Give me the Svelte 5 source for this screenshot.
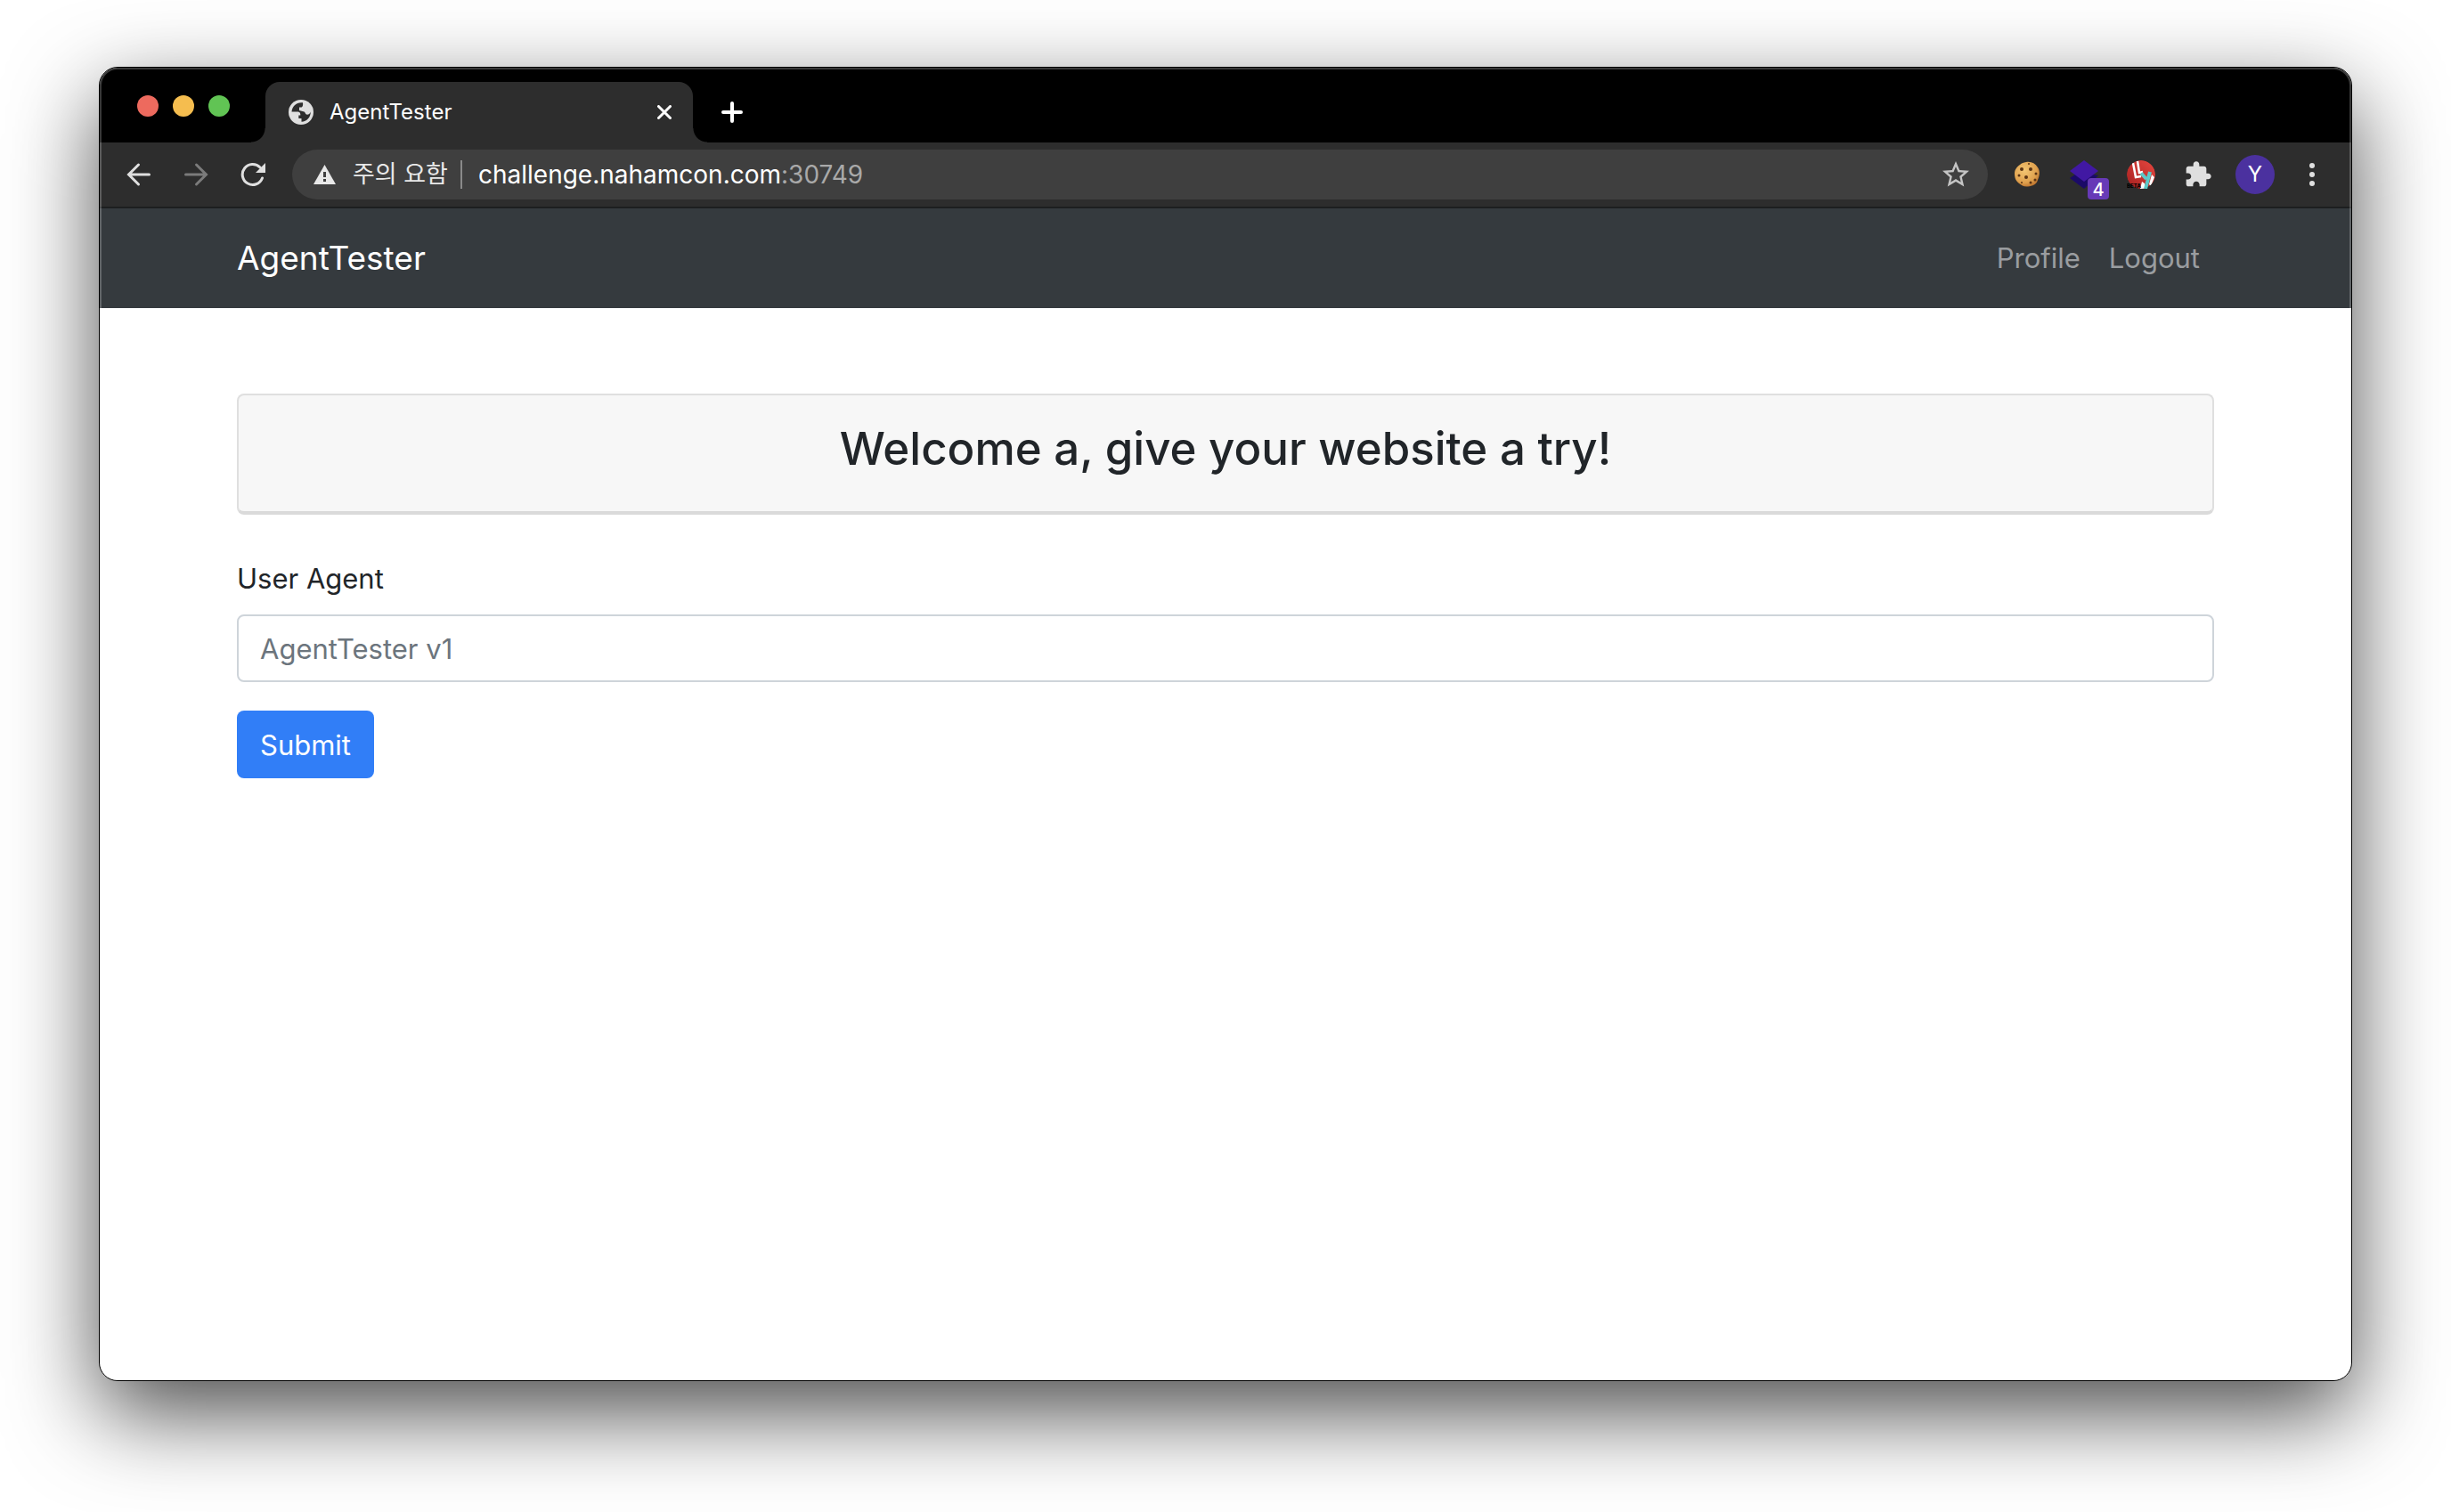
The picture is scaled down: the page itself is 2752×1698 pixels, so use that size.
<script>
  let agent = $state('');
  let address = $state('challenge.nahamcon.com');
</script>

<div class="desktop">
  <div class="window">
    <header class="tabstrip">
      <div class="lights">
        <button class="light red" aria-label="Close window"></button>
        <button class="light yellow" aria-label="Minimize window"></button>
        <button class="light green" aria-label="Zoom window"></button>
      </div>
      <div class="tab">
        <svg width="28" height="28" viewBox="0 0 28 28" aria-hidden="true">
          <circle cx="14" cy="14" r="14" fill="#dfdfdf" />
          <path d="M16 3.300C9 2.500 4 7 3.500 13.500H9C11.500 13.500 13.300 14 13.300 16.500V17.500H11.300V21H14.500V24.700C20.500 24.500 25 19.500 24.700 13.500C24 16 22.500 16.700 21 16.700C18.500 16.700 19 14 17.500 13.500L12 12V8.500H14C15.500 8.500 16.500 7 16 3.300Z" fill="#2d2d2d" />
        </svg>
        <span class="title">AgentTester</span>
        <button class="icon" aria-label="Close tab">
          <svg width="16" height="16" viewBox="0 0 16 16"><path d="M1.500 1.500L14.500 14.500M14.500 1.500L1.500 14.500" stroke="#fff" stroke-width="3" stroke-linecap="round" /></svg>
        </button>
      </div>
      <button class="icon newtab" aria-label="New tab">
        <svg width="24" height="24" viewBox="0 0 24 24"><path d="M12 2V22M2 12H22" stroke="#fff" stroke-width="4" stroke-linecap="round" /></svg>
      </button>
    </header>

    <div class="toolbar">
      <button class="slot" aria-label="Back">
        <svg width="28" height="28" viewBox="0 0 28 28"><path d="M25.500 14H3M13.500 3L2.500 14L13.500 25" fill="none" stroke="#dfdfdf" stroke-width="3" stroke-linecap="round" /></svg>
      </button>
      <button class="slot" aria-label="Forward">
        <svg width="28" height="28" viewBox="0 0 28 28"><path d="M2.500 14H25M14.500 3L25.500 14L14.500 25" fill="none" stroke="#7b7b7b" stroke-width="3" stroke-linecap="round" /></svg>
      </button>
      <button class="slot" aria-label="Reload">
        <svg width="28" height="28" viewBox="0 0 28 28"><path d="M22 6A11.500 11.500 0 1 0 24.500 18" fill="none" stroke="#dfdfdf" stroke-width="3" stroke-linecap="round" /><path d="M28 1V12H17Z" fill="#dfdfdf" /></svg>
      </button>
      <div class="omnibox">
        <svg width="26" height="24" viewBox="0 0 26 24" aria-hidden="true"><path d="M12.500 1L25 23H0Z" fill="#e8e8e8" /><path d="M12.500 9V15M12.500 17V20" stroke="#3f3f3f" stroke-width="3" /></svg>
        <span class="warn">주의 요함</span>
        <span class="bar"></span>
        <span class="url">{address}<span class="port">:30749</span></span>
        <button class="icon" aria-label="Bookmark this page">
          <svg width="36" height="36" viewBox="0 0 24 24"><path fill="#c4c4c4" d="M22 9.240l-7.190-.62L12 2 9.190 8.630 2 9.240l5.460 4.730L5.820 21 12 17.270 18.180 21l-1.630-7.030L22 9.240zM12 15.400l-3.760 2.270 1-4.280-3.320-2.880 4.380-.38L12 6.100l1.710 4.040 4.380.38-3.320 2.880 1 4.280L12 15.400z" /></svg>
        </button>
      </div>
      <button class="slot" aria-label="Cookie editor">
        <svg width="32" height="32" viewBox="0 0 32 32">
          <defs><radialGradient id="dough" cx=".4" cy=".35" r=".7"><stop offset="0" stop-color="#f3c673" /><stop offset=".7" stop-color="#dfa04d" /><stop offset="1" stop-color="#b96f2b" /></radialGradient></defs>
          <path d="M15 2C20 1 25 3 28 8C31 12 30 18 28 22C27 27 22 29 17 29.500C12 30 10 28 7 26C3 23 2 19 2 15C2 10 5 7 8 5C10 3 12 2.500 15 2Z" fill="url(#dough)" />
          <g fill="#5c3414"><circle cx="10" cy="10" r="2" /><circle cx="20" cy="10" r="2" /><circle cx="15" cy="19" r="2" /><circle cx="26" cy="15" r="1.500" /><circle cx="7" cy="17" r="1.500" /><circle cx="20" cy="25" r="1.500" /><circle cx="25" cy="22" r="1.500" /><circle cx="10" cy="25" r="1" /><circle cx="18" cy="4" r="1" /></g>
        </svg>
      </button>
      <button class="slot" aria-label="Layers, 4">
        <svg width="32" height="32" viewBox="0 0 32 32"><path d="M0 20L6 16H26L32 17L16 32Z" fill="#1b0a68" /><path d="M16 0L32 12L16 24L0 12Z" fill="#4118a3" /></svg>
        <span class="badge">4</span>
      </button>
      <button class="slot" aria-label="LLY beta">
        <svg width="32" height="32" viewBox="0 0 32 32">
          <defs><linearGradient id="ball" x1="1" y1="0" x2="0" y2="1"><stop offset="0" stop-color="#e8473f" /><stop offset="1" stop-color="#a51f1f" /></linearGradient><clipPath id="disc"><circle cx="16" cy="16" r="16" /></clipPath></defs>
          <g clip-path="url(#disc)"><circle cx="16" cy="16" r="16" fill="url(#ball)" />
            <path d="M7 3L10 19L16 18M12 1L14 14L18 13" fill="none" stroke="#fff" stroke-width="2.500" />
            <path d="M28 16L31 19L27 29L25 27ZM17 24L20 26V32H15Z" fill="#fff" /></g>
          <path d="M16 14.500L22 21M26 13L21 32" fill="none" stroke="#5cc8c8" stroke-width="4" />
          <text class="beta" x="0" y="31">BETA</text>
        </svg>
      </button>
      <button class="slot" aria-label="Extensions">
        <svg width="32" height="32" viewBox="0 0 24 24"><path fill="#dfdfdf" d="M20.500 11H19V7c0-1.100-.9-2-2-2h-4V3.500C13 2.120 11.880 1 10.500 1S8 2.120 8 3.500V5H4c-1.100 0-1.990.9-1.990 2v3.800H3.500c1.490 0 2.700 1.210 2.700 2.700s-1.210 2.700-2.700 2.700H2V20c0 1.100.9 2 2 2h3.800v-1.500c0-1.490 1.210-2.700 2.700-2.700 1.490 0 2.700 1.210 2.700 2.700V22H17c1.100 0 2-.9 2-2v-4h1.500c1.380 0 2.500-1.120 2.500-2.500S21.880 11 20.500 11z" /></svg>
      </button>
      <button class="slot" aria-label="Account"><span class="avatar">Y</span></button>
      <button class="slot" aria-label="Menu">
        <svg width="8" height="28" viewBox="0 0 8 28" fill="#dfdfdf"><circle cx="4" cy="4" r="3" /><circle cx="4" cy="14" r="3" /><circle cx="4" cy="24" r="3" /></svg>
      </button>
    </div>

    <nav class="navbar">
      <div class="container navrow">
        <a class="brand" href="#home">AgentTester</a>
        <a class="link" href="#profile">Profile</a>
        <a class="link" href="#logout">Logout</a>
      </div>
    </nav>

    <main class="container">
      <div class="card"><h1>Welcome a, give your website a try!</h1></div>
      <form onsubmit={(e) => e.preventDefault()}>
        <label for="agent">User Agent</label>
        <input id="agent" type="text" placeholder="AgentTester v1" bind:value={agent} />
        <button class="submit" type="submit">Submit</button>
      </form>
    </main>
  </div>
</div>

<style>
  :global(body) { background: #fff; }
  * { box-sizing: border-box; }
  .desktop {
    display: flex;
    min-height: 100vh;
    padding: 75px 111px 147px;
    font-family: Inter, "Noto Sans CJK KR", sans-serif;
  }
  .window {
    position: relative;
    flex: 1;
    min-width: 0;
    border: 1px solid #000;
    border-radius: 21px;
    overflow: hidden;
    background: #fff;
    box-shadow: 0 36px 100px rgba(0, 0, 0, 0.7);
  }
  .window::after {
    content: "";
    position: absolute;
    inset: 0;
    border-radius: 20px;
    box-shadow: inset 0 0 0 2px rgba(255, 255, 255, 0.22);
    pointer-events: none;
  }
  button {
    border: 0;
    padding: 0;
    background: none;
    font-family: inherit;
    color: inherit;
  }
  svg { display: block; flex: none; }
  .tabstrip {
    display: flex;
    align-items: flex-end;
    height: 84px;
    background: #000;
  }
  .lights {
    display: flex;
    align-self: center;
    gap: 16px;
    width: 186px;
    padding: 2px 0 0 42px;
  }
  .light { width: 24px; height: 24px; border-radius: 50%; }
  .red { background: #ed6a5e; }
  .yellow { background: #f5bd4f; }
  .green { background: #61c454; }
  .tab {
    position: relative;
    display: flex;
    align-items: center;
    width: 480px;
    height: 68px;
    padding: 0 24px 0 26px;
    border-radius: 16px 16px 0 0;
    background: #2d2d2d;
    color: #fff;
  }
  .tab::before, .tab::after {
    content: "";
    position: absolute;
    bottom: 0;
    width: 16px;
    height: 16px;
  }
  .tab::before { right: 100%; background: radial-gradient(circle at 0 0, #000 15px, #2d2d2d 16px); }
  .tab::after { left: 100%; background: radial-gradient(circle at 100% 0, #000 15px, #2d2d2d 16px); }
  .title { flex: 1; margin-left: 18px; font-size: 24px; line-height: 32px; }
  .newtab { height: 68px; margin-left: 32px; }
  .toolbar {
    display: flex;
    align-items: center;
    height: 74px;
    padding: 0 12px;
    border-bottom: 2px solid #1d1f20;
    background: #2d2d2d;
  }
  .slot {
    position: relative;
    display: flex;
    flex: none;
    align-items: center;
    justify-content: center;
    width: 64px;
    height: 64px;
  }
  .omnibox {
    display: flex;
    flex: 1;
    align-items: center;
    min-width: 0;
    height: 56px;
    margin: 0 12px;
    padding: 0 18px 0 24px;
    border-radius: 28px;
    background: #3f3f3f;
    font-size: 28px;
    line-height: 40px;
    white-space: nowrap;
  }
  .warn { margin-left: 18px; color: #e8e8e8; font-size: 27px; }
  .bar { width: 2px; height: 32px; margin: 0 18px 0 14px; background: #8a8a8a; }
  .url { flex: 1; color: #fff; }
  .port { color: #a9a9a9; }
  .badge {
    position: absolute;
    right: 4px;
    bottom: 4px;
    width: 24px;
    height: 24px;
    border-radius: 4px;
    background: #673ab7;
    color: #fff;
    font-size: 20px;
    line-height: 26px;
    font-weight: 500;
    text-align: center;
  }
  .beta { font-size: 6px; font-weight: 800; fill: #000; }
  .avatar {
    width: 44px;
    height: 44px;
    border-radius: 50%;
    background: #4b319f;
    color: #fff;
    font-size: 24px;
    line-height: 44px;
    text-align: center;
  }
  .container {
    width: 100%;
    max-width: 2280px;
    margin: 0 auto;
    padding: 0 30px;
  }
  .navbar { background: #353a3e; }
  .navrow { display: flex; align-items: center; height: 112px; }
  .brand { margin-right: auto; color: #fff; font-size: 37px; line-height: 60px; text-decoration: none; }
  .link { padding: 0 16px; color: #9a9da0; font-size: 31px; line-height: 48px; text-decoration: none; }
  .card {
    margin: 96px 0 48px;
    padding: 30px 40px 40px;
    border: 2px solid #dfdfdf;
    border-bottom: 4px solid #dadada;
    border-radius: 8px;
    background: #f7f7f7;
  }
  h1 { margin: 0; color: #212529; font-size: 51px; line-height: 60px; font-weight: 500; text-align: center; }
  form { display: flex; flex-direction: column; align-items: flex-start; color: #212529; }
  label { margin-bottom: 16px; font-size: 31px; line-height: 48px; }
  input {
    width: 100%;
    height: 76px;
    padding: 0 24px;
    border: 2px solid #ced4da;
    border-radius: 8px;
    background: #fff;
    color: #495057;
    font-family: inherit;
    font-size: 31px;
  }
  input::placeholder { color: #6c757d; opacity: 1; }
  .submit {
    height: 76px;
    margin-top: 32px;
    padding: 0 26px;
    border-radius: 8px;
    background: #317ef7;
    color: #fff;
    font-size: 31px;
  }
</style>
